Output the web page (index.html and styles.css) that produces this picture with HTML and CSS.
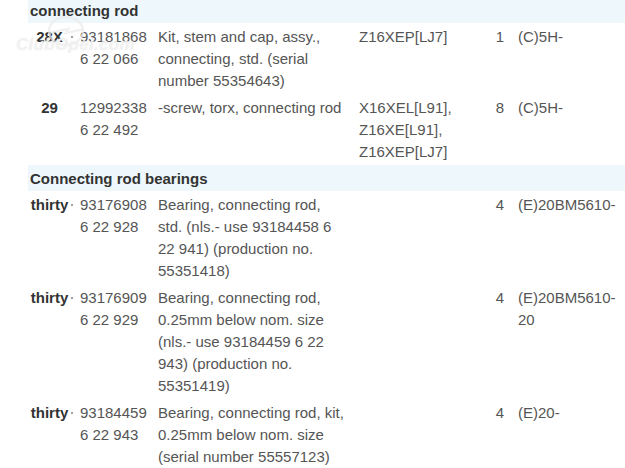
FILE: index.html
```html
<!DOCTYPE html>
<html>
<head>
<meta charset="utf-8">
<link rel="stylesheet" href="styles.css">
</head>
<body>
<div class="page">
<table class="parts">
  <colgroup>
    <col class="c-no"><col class="c-pn"><col class="c-desc"><col class="c-eng"><col class="c-qty"><col class="c-code">
  </colgroup>
  <tr class="group"><td colspan="6">connecting rod</td></tr>
  <tr>
    <td class="no">28X</td>
    <td class="pn">93181868<br>6 22 066</td>
    <td class="desc">Kit, stem and cap, assy., connecting, std. (serial number 55354643)</td>
    <td class="eng">Z16XEP[LJ7]</td>
    <td class="qty">1</td>
    <td class="code">(C)5H-</td>
  </tr>
  <tr>
    <td class="no">29</td>
    <td class="pn nodot">12992338<br>6 22 492</td>
    <td class="desc">-screw, torx, connecting rod</td>
    <td class="eng">X16XEL[L91],<br>Z16XE[L91],<br>Z16XEP[LJ7]</td>
    <td class="qty">8</td>
    <td class="code">(C)5H-</td>
  </tr>
  <tr class="group"><td colspan="6">Connecting rod bearings</td></tr>
  <tr>
    <td class="no">thirty</td>
    <td class="pn">93176908<br>6 22 928</td>
    <td class="desc">Bearing, connecting rod, std. (nls.- use 93184458 6 22 941) (production no. 55351418)</td>
    <td class="eng"></td>
    <td class="qty">4</td>
    <td class="code">(E)20BM5610-</td>
  </tr>
  <tr>
    <td class="no">thirty</td>
    <td class="pn">93176909<br>6 22 929</td>
    <td class="desc">Bearing, connecting rod, 0.25mm below nom. size (nls.- use 93184459 6 22 943) (production no. 55351419)</td>
    <td class="eng"></td>
    <td class="qty">4</td>
    <td class="code">(E)20BM5610-20</td>
  </tr>
  <tr>
    <td class="no">thirty</td>
    <td class="pn">93184459<br>6 22 943</td>
    <td class="desc">Bearing, connecting rod, kit, 0.25mm below nom. size (serial number 55557123)</td>
    <td class="eng"></td>
    <td class="qty">4</td>
    <td class="code">(E)20-</td>
  </tr>
</table>
<div class="watermark">
  <svg class="wm-logo" width="44" height="34" viewBox="0 0 44 34">
    <ellipse cx="22" cy="17" rx="17" ry="14" fill="none" stroke="#ececec" stroke-width="2.5"/>
    <path d="M4 19 L24 15 L22 19 L40 15" fill="none" stroke="#ececec" stroke-width="2.5"/>
  </svg>
  <span class="wm-text">ClubOpel.com</span>
</div>
</div>
</body>
</html>
```

FILE: styles.css
```css
html, body {
  margin: 0;
  padding: 0;
  background: #ffffff;
}

.page {
  position: relative;
  width: 625px;
  height: 468px;
  overflow: hidden;
  font-family: "Liberation Sans", Arial, sans-serif;
  font-size: 15px;
  line-height: 22px;
  color: #555555;
}

.parts {
  margin: -3px 0 0 28px;
  width: 597px;
  border-collapse: collapse;
  table-layout: fixed;
}

.c-no { width: 42px; }
.c-pn { width: 86px; }
.c-desc { width: 201px; }
.c-eng { width: 136px; }
.c-qty { width: 14px; }
.c-code { width: 118px; }

.parts td {
  padding: 3px 2px 2px;
  vertical-align: top;
}

.group td {
  background: #eef8fc;
  color: #333333;
  font-weight: bold;
  padding: 3px 2px 1px;
}

.parts td.no {
  font-weight: bold;
  color: #333333;
  text-align: center;
  padding-left: 1px;
  padding-right: 0;
}

.parts td.pn {
  padding-left: 10px;
  padding-right: 2px;
  background: radial-gradient(circle at 2px 14px, #a0a0a0 0, #a0a0a0 1px, transparent 1.6px) no-repeat;
}

.parts td.pn.nodot {
  background: none;
}

.parts td.desc {
  padding-left: 2px;
  padding-right: 9px;
}

.parts td.eng {
  padding-left: 2px;
}

.parts td.qty {
  text-align: center;
  padding-left: 0;
  padding-right: 0;
}

.parts td.code {
  padding-left: 11px;
  padding-right: 0;
}

.watermark {
  position: absolute;
  left: 14px;
  top: 14px;
  width: 100px;
  height: 40px;
  pointer-events: none;
}

.wm-logo {
  position: absolute;
  left: 30px;
  top: 0;
  opacity: 0.7;
}

.wm-text {
  position: absolute;
  left: 2px;
  top: 21px;
  font-family: "Liberation Sans", Arial, sans-serif;
  font-style: italic;
  font-weight: bold;
  font-size: 17px;
  line-height: 20px;
  color: rgba(255, 255, 255, 0.5);
  text-shadow: 0 0 1px #e2e2e2;
  letter-spacing: 0.3px;
}
```
